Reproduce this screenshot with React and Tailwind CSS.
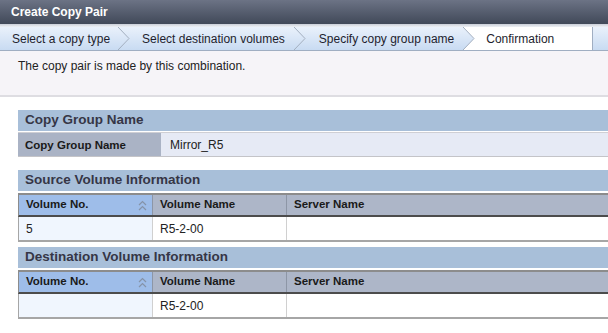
import React from "react";

function Chevron({ id, rightWhite }) {
  return (
    <div className={rightWhite ? "w-[12px] h-full bg-white shrink-0" : "w-[12px] h-full bg-gradient-to-b from-[#eaf1fb] to-[#c8dbf2] shrink-0"}>
      <svg width="12" height="23" viewBox="0 0 12 23" className="block">
        <defs>
          <linearGradient id={id} x1="0" y1="0" x2="0" y2="1">
            <stop offset="0" stopColor="#eaf1fb" />
            <stop offset="1" stopColor="#c8dbf2" />
          </linearGradient>
        </defs>
        <polygon points="0,0 11,11.5 0,23" fill={`url(#${id})`} />
        <polyline points="0,0 11,11.5 0,23" fill="none" stroke="#a3afbf" strokeWidth="1" />
      </svg>
    </div>
  );
}

function SortIcon() {
  return (
    <svg width="9" height="11" viewBox="0 0 9 11" className="block">
      <polyline points="1,5 4.5,1.5 8,5" fill="none" stroke="#8593a8" strokeWidth="1.2" />
      <polyline points="1,10 4.5,6.5 8,10" fill="none" stroke="#8593a8" strokeWidth="1.2" />
    </svg>
  );
}

function SectionHeader({ children }) {
  return (
    <div className="h-[21px] bg-[#a8bfd9] flex items-center pl-[7px] text-[13.5px] font-bold text-[#363646]">
      {children}
    </div>
  );
}

function VolumeTable({ no, name }) {
  return (
    <div className="mt-[2px]">
      <div className="flex h-[24px] border-t-2 border-t-[#8c8c8c] border-b-2 border-b-[#4c4c4c] border-l border-l-[#8c8c8c] text-[11.5px] font-bold text-[#1a1a1a]">
        <div className="w-[134px] shrink-0 bg-[#9ebde9] flex items-center justify-between pl-[7px] pr-[5px] border-r border-r-[#8d96a6]">
          <span>Volume No.</span>
          <SortIcon />
        </div>
        <div className="w-[134px] shrink-0 bg-[#adb6c8] flex items-center pl-[7px] border-r border-r-[#8d96a6]">
          Volume Name
        </div>
        <div className="flex-1 bg-[#adb6c8] flex items-center pl-[7px]">Server Name</div>
      </div>
      <div className="flex h-[25px] border-b-2 border-b-[#a6a6a6] border-l border-l-[#a6a6a6] text-[12px] text-[#222]">
        <div className="w-[134px] shrink-0 bg-[#f0f6fe] flex items-center pl-[7px] pt-[1px] border-r border-r-[#d0d0d0]">
          {no}
        </div>
        <div className="w-[134px] shrink-0 bg-white flex items-center pl-[7px] pt-[1px] border-r border-r-[#d0d0d0]">
          {name}
        </div>
        <div className="flex-1 bg-white"></div>
      </div>
    </div>
  );
}

export default function App() {
  const tab = "h-full flex items-center bg-gradient-to-b from-[#eaf1fb] to-[#c8dbf2] shrink-0";
  return (
    <div className="w-[608px] h-[333px] overflow-hidden bg-white font-['Liberation_Sans',Arial,sans-serif]">
      <div className="h-[24px] bg-gradient-to-b from-[#6c7385] to-[#414959] flex items-center pl-[11px] text-[12px] font-bold text-white">
        Create Copy Pair
      </div>
      <div className="h-[3px] bg-gradient-to-b from-[#c9ced8] to-[#eef0f4]"></div>
      <div className="h-[24px] flex border-b border-b-[#a0aec2] text-[12px] text-[#1e1e2e]">
        <div className={tab + " pl-[12px] pr-[8px] pt-[1px]"}>Select a copy type</div>
        <Chevron id="g1" />
        <div className={tab + " pl-[12px] pr-[9px] pt-[1px]"}>Select destination volumes</div>
        <Chevron id="g2" />
        <div className={tab + " pl-[13px] pr-[9px] pt-[1px]"}>Specify copy group name</div>
        <Chevron id="g3" rightWhite />
        <div className="h-full flex items-center bg-white pl-[11px] pt-[1px] w-[117px] shrink-0">Confirmation</div>
        <div className="h-full flex-1 border-l border-l-[#a0aec2] bg-gradient-to-b from-[#eaf1fb] to-[#c8dbf2]"></div>
      </div>
      <div className="h-[46px] bg-[#f6f4f8] border-b-2 border-b-[#dedde2] pl-[18px] pt-[6px] text-[12px] text-[#222]">
        The copy pair is made by this combination.
      </div>
      <div className="pl-[18px] pt-[13px]">
        <SectionHeader>Copy Group Name</SectionHeader>
        <div className="mt-[1px] flex h-[25px] border-t border-t-[#cfcfd4] border-b border-b-[#c4c4c8] text-[12px]">
          <div className="w-[143px] shrink-0 bg-[#aab3c5] flex items-center pl-[7px] pt-[2px] font-bold text-[11.5px] text-[#1a1a1a]">
            Copy Group Name
          </div>
          <div className="flex-1 bg-[#e6eaf5] flex items-center pl-[9px] text-[#222]">Mirror_R5</div>
        </div>
        <div className="mt-[13px]">
          <SectionHeader>Source Volume Information</SectionHeader>
          <VolumeTable no="5" name="R5-2-00" />
        </div>
        <div className="mt-[5px]">
          <SectionHeader>Destination Volume Information</SectionHeader>
          <VolumeTable no="" name="R5-2-00" />
        </div>
      </div>
    </div>
  );
}
